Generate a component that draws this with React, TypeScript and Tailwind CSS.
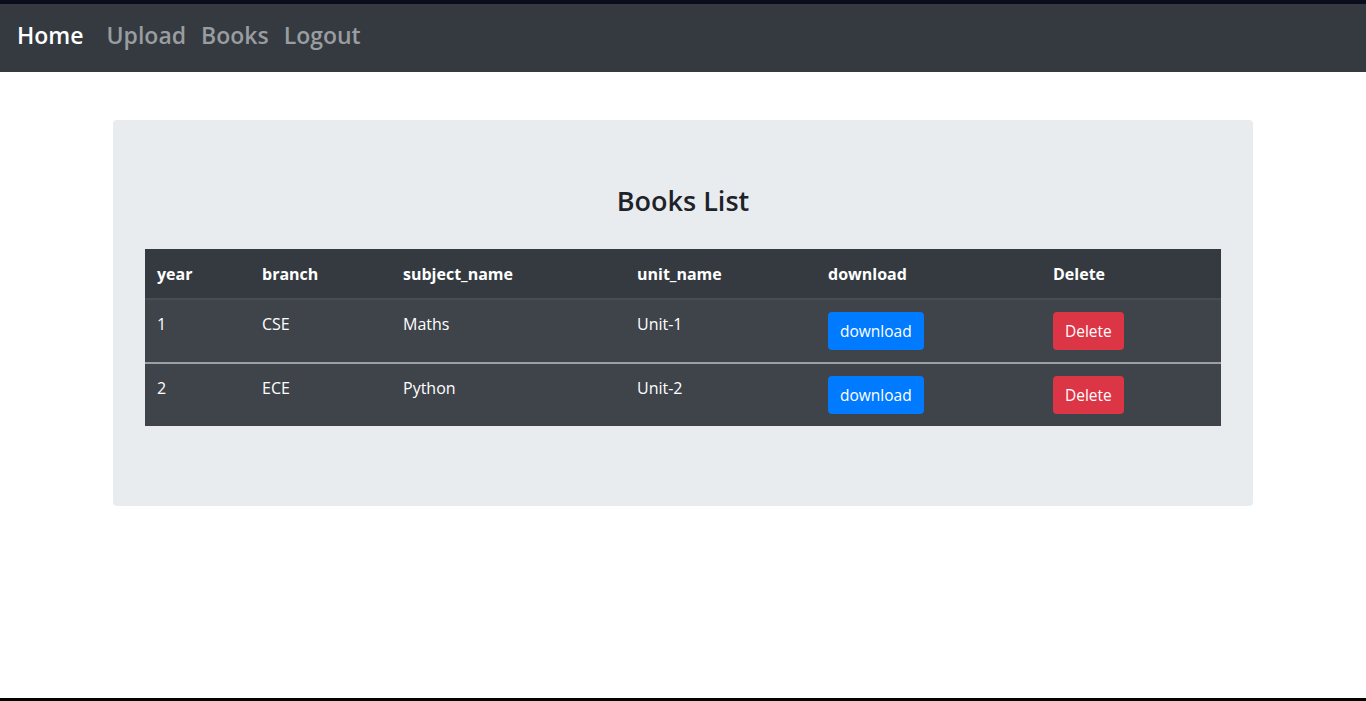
const books = [
  { year: 1, branch: "CSE", subject: "Maths", unit: "Unit-1" },
  { year: 2, branch: "ECE", subject: "Python", unit: "Unit-2" },
];

export default function App() {
  return (
    <div className="min-h-[701px] flex flex-col bg-white font-['Open_Sans',sans-serif] text-[16px] text-[#212529]">
      <div className="h-[4px] bg-[#0b0c1c]" />
      {/* Navbar */}
      <nav className="h-[68px] bg-[#343a40] flex items-center px-[17px] pb-[5px]">
        <a className="text-[23px] font-semibold text-white mr-[23px]">Home</a>
        <div className="flex items-center gap-[15px] text-[23px] font-semibold text-[#9a9da0]">
          <a>Upload</a>
          <a>Books</a>
          <a>Logout</a>
        </div>
      </nav>

      {/* Content */}
      <div className="flex-1 pt-[48px]">
        <div className="w-[1140px] mx-auto bg-[#e9ecef] rounded-[4px] px-[32px] pt-[64px] pb-[64px]">
          <h3 className="text-center text-[27px] leading-[34px] font-semibold text-[#1e2329] mb-[31px]">
            Books List
          </h3>
          <table className="w-full text-white border-collapse mb-[16px] table-fixed">
            <colgroup>
              <col className="w-[105px]" />
              <col className="w-[141px]" />
              <col className="w-[234px]" />
              <col className="w-[191px]" />
              <col className="w-[225px]" />
              <col className="w-[180px]" />
            </colgroup>
            <thead className="bg-[#343a40]">
              <tr className="border-b-2 border-[#454d55]">
                {["year", "branch", "subject_name", "unit_name", "download", "Delete"].map((h) => (
                  <th key={h} className="text-left font-bold pt-[13px] pb-[12px] px-[12px] leading-[24px]">
                    {h}
                  </th>
                ))}
              </tr>
            </thead>
            <tbody className="bg-[#3f444b]">
              {books.map((b, i) => (
                <tr key={b.year} className={i > 0 ? "border-t-2 border-[#9da0a3]" : ""}>
                  <td className="p-[12px] align-top leading-[24px]">{b.year}</td>
                  <td className="p-[12px] align-top leading-[24px]">{b.branch}</td>
                  <td className="p-[12px] align-top leading-[24px]">{b.subject}</td>
                  <td className="p-[12px] align-top leading-[24px]">{b.unit}</td>
                  <td className="p-[12px] align-top">
                    <button className="h-[38px] px-[12px] rounded-[4px] bg-[#007bff] text-white text-[15.5px] leading-[24px]">
                      download
                    </button>
                  </td>
                  <td className="p-[12px] align-top">
                    <button className="h-[38px] px-[12px] rounded-[4px] bg-[#dc3545] text-white text-[15.5px] leading-[24px]">
                      Delete
                    </button>
                  </td>
                </tr>
              ))}
            </tbody>
          </table>
        </div>
      </div>
      <div className="h-[3px] bg-black" />
    </div>
  );
}
